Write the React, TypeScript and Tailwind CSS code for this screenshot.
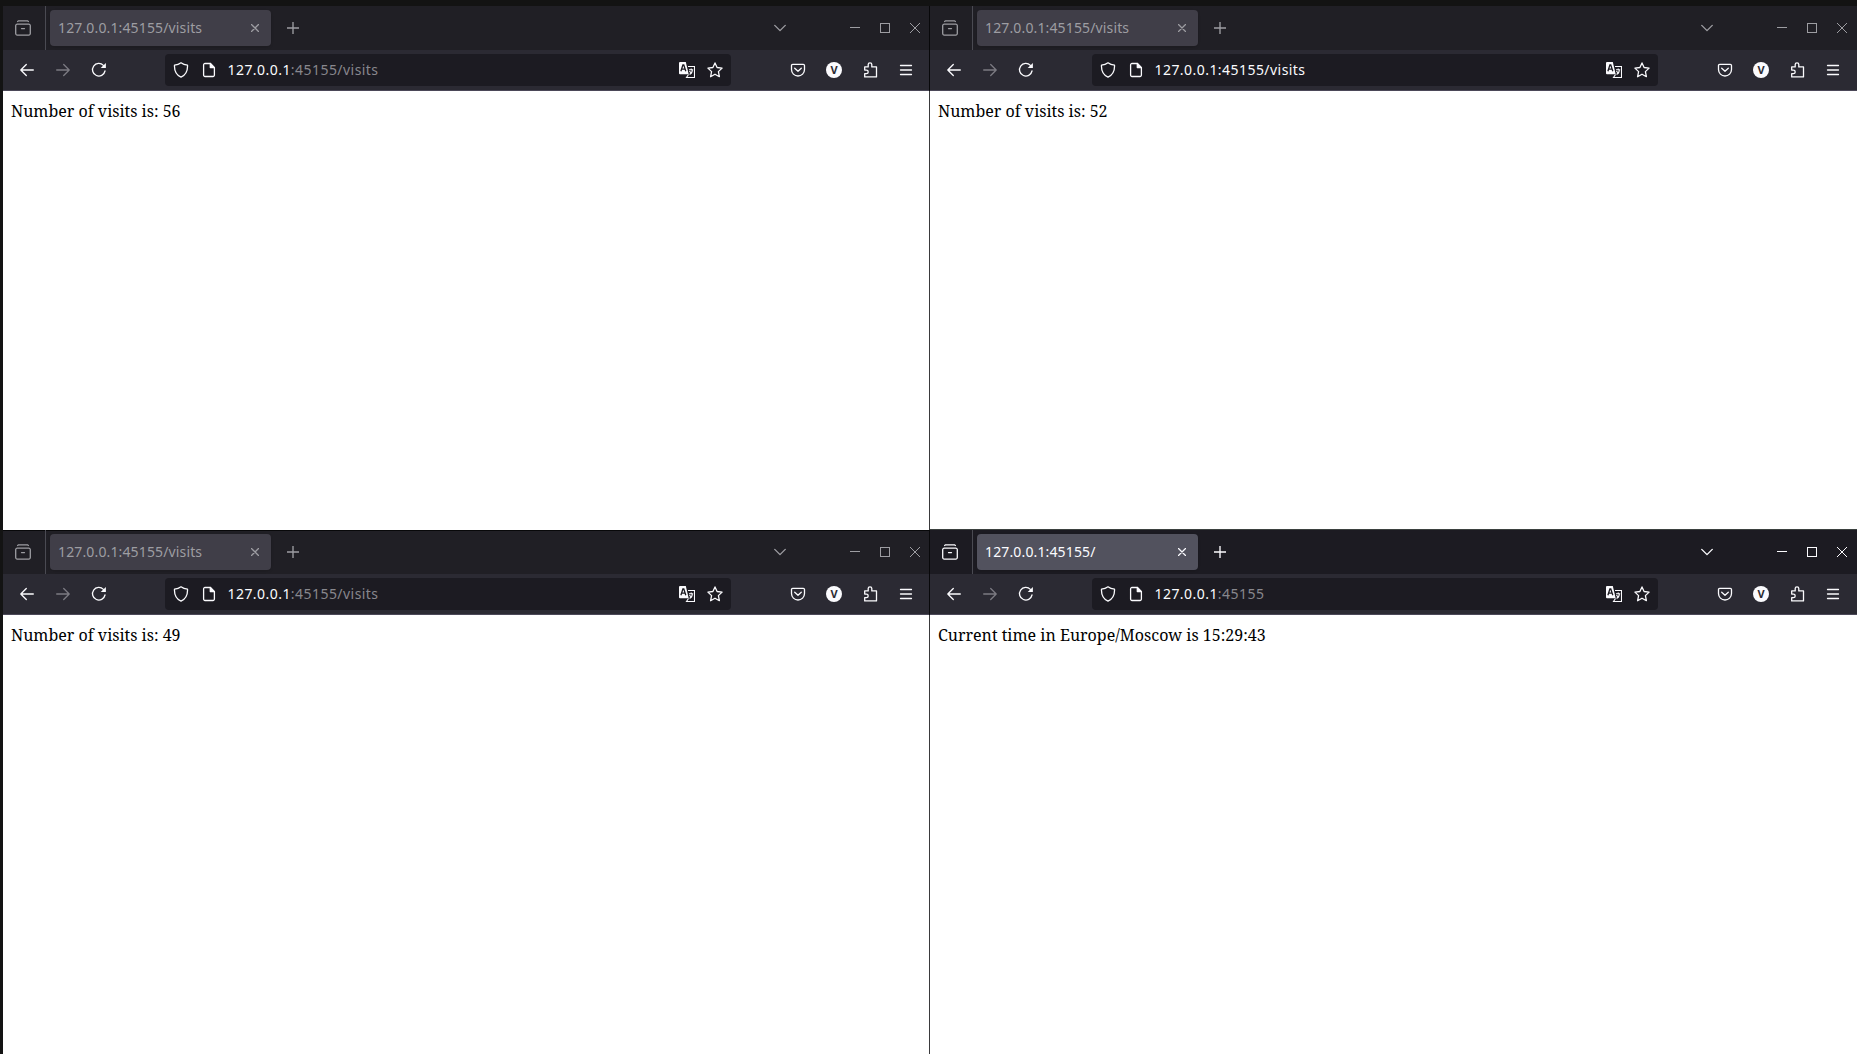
import React from "react";

type WindowProps = { tab: string; host: string; path: string; body: string; active?: boolean; brightPath?: boolean; side: "left" | "right"; strip?: string };

const Svg = ({ children, className = "", size = 16 }: { children: React.ReactNode; className?: string; size?: number }) => (
  <svg width={size} height={size} viewBox="0 0 16 16" fill="none" stroke="currentColor" strokeWidth="1.3" strokeLinecap="round" strokeLinejoin="round" className={"shrink-0 " + className}>
    {children}
  </svg>
);

function BrowserWindow({ tab, host, path, body, active, brightPath, side, strip = "" }: WindowProps) {
  const tone = active ? "text-[#fbfbfe]" : "text-[#9d9da2]";
  return (
    <section className="flex min-w-0 flex-col overflow-hidden">
      <div className={"flex h-11 shrink-0 items-center " + (active ? "bg-[#1c1b22] " : "bg-[#201f25] ") + tone + " " + strip}>
        <div className="flex h-full w-[43px] shrink-0 items-center border-r border-[#4a4a52] pl-3">
          <Svg>
            <path d="M2.600 1.500L3.600 .8h8.800l1 .7" />
            <path d="M2.200 4.200h11.600a1.500 1.500 0 0 1 1.500 1.500v7.900a1.500 1.500 0 0 1-1.500 1.500H2.200a1.500 1.500 0 0 1-1.500-1.500V5.700a1.500 1.500 0 0 1 1.500-1.500zM6.500 8.600h3" />
          </Svg>
        </div>
        <div className={"ml-1 flex h-9 w-[221px] shrink-0 items-center justify-between rounded pl-2 pr-3 shadow-sm " + (active ? "bg-[#52525e]" : "bg-[#403e48]")}>
          <span className="-mt-0.5 whitespace-nowrap font-['Noto_Sans'] text-[14px] tracking-[0.14px]">{tab}</span>
          <Svg size={8}><path d="M1 1l14 14M15 1L1 15" strokeWidth="2.600" /></Svg>
        </div>
        <Svg size={12} className="ml-[15.5px]"><path d="M8 0v16M0 8h16" strokeWidth="1.800" /></Svg>
        <div className={"ml-auto flex items-center " + (side === "left" ? "mr-[9px]" : "mr-2.5")}>
          <Svg size={12} className="mr-16"><path d="M1 4.500l7 7 7-7" strokeWidth="1.800" /></Svg>
          <svg width="70" height="10" fill="none" stroke="currentColor" shapeRendering="crispEdges">
            <path d="M0 4.500h10M30.500 .5h9v9h-9z" />
            <path d="M60 0l10 10M70 0l-10 10" shapeRendering="auto" />
          </svg>
        </div>
      </div>
      <div className="flex h-[41px] shrink-0 items-center border-b border-[#4b4858] bg-[#2b2a33] text-[#fbfbfe]">
        <Svg className="ml-4"><path d="M14.300 8H2M7.300 2.500L1.800 8l5.500 5.500" /></Svg>
        <Svg className="ml-5 text-[#7c7b82]"><path d="M1.700 8H14M8.700 2.500L14.200 8l-5.500 5.500" /></Svg>
        <Svg className="ml-5"><path d="M14 9a6.300 6.300 0 1 1-1.600-5.600" /><path d="M14.900 1v5H9.700z" fill="currentColor" stroke="none" /></Svg>
        <div className="ml-[58px] flex h-8 w-[566px] items-center rounded bg-[#1c1b22]">
          <Svg className="ml-2"><path d="M8 .8c2 1.500 4 2.100 6.500 2.300.300 5-1.500 9.800-6.500 12.100C3 12.900 1.200 8.100 1.500 3.100 4 2.900 6 2.300 8 .8z" /></Svg>
          <Svg className="ml-3"><path d="M9.300 1.500H4A1.400 1.400 0 0 0 2.600 2.900v10.200A1.400 1.400 0 0 0 4 14.500h8a1.400 1.400 0 0 0 1.400-1.400V5.600z" /><path d="M9.300 1.500v4.100h4.100z" fill="currentColor" /></Svg>
          <span className="-mt-0.5 ml-[10.5px] whitespace-nowrap font-['Noto_Sans'] text-[14px] tracking-[0.45px]">
            {host}<span className={brightPath ? "" : "text-[#88878d]"}>{path}</span>
          </span>
          <svg width="16" height="16" className="ml-auto shrink-0">
            <path d="M9 4.500h6.500v11H7.500l2-3" fill="none" stroke="currentColor" strokeWidth="1.100" />
            <path d="M1 0h5.800l2.900 12.200H1a1 1 0 0 1-1-1V1a1 1 0 0 1 1-1z" fill="currentColor" />
            <path d="M1.900 9.300L3.900 3h.9l2 6.300M2.700 7.200h3.400" fill="none" stroke="#1c1b22" strokeWidth="1.300" />
            <path d="M10 7.700h4.200M12.200 6.500v1.200M10.600 12.500c1.700-1 2.700-2.500 2.700-4.600M10.500 9c.5 1.200 1.500 1.900 2.500 2.200" fill="none" stroke="currentColor" strokeWidth="1.100" />
          </svg>
          <Svg className="ml-3 mr-2"><path d="M8 .9l2.100 4.600 5 .6-3.700 3.500 1 5.100L8 12.200l-4.400 2.500 1-5.100L.9 6.100l5-.6z" /></Svg>
        </div>
        <div className={"ml-auto flex items-center gap-5 " + (side === "left" ? "mr-[15px]" : "mr-4")}>
          <Svg><path d="M2.700 2.300h10.600a1.200 1.200 0 0 1 1.200 1.200V7.500a6.500 6.500 0 0 1-13 0V3.500a1.200 1.200 0 0 1 1.200-1.200zM4.700 6.200L8 9.300l3.300-3.100" /></Svg>
          <span className="flex size-4 items-center justify-center rounded-full bg-[#fbfbfe] font-['Noto_Sans'] text-[11px] font-bold leading-4 text-[#2b2a33]">V</span>
          <Svg><path d="M2.700 7V4.900h3.500V2.600a1.800 1.800 0 0 1 3.600 0v2.300h4.700v10H2.700v-3.200h1.700a1.800 1.800 0 0 0 0-3.600H2.700z" /></Svg>
          <Svg><path d="M2.500 3.500h11M2.500 8h11M2.500 12.500h11" /></Svg>
        </div>
      </div>
      <div className="min-h-0 flex-1 bg-white pl-2 pt-2 font-['Noto_Serif',serif] text-base text-black">{body}</div>
    </section>
  );
}

const Divider = () => (
  <>
    <div className="h-[85px] shrink-0 bg-[#08080a]" />
    <div className="flex-1 bg-[#3a3a3c]" />
  </>
);

export default function App() {
  return (
    <main className="flex h-[1054px] w-[1857px] flex-col overflow-hidden bg-[#131313] pl-[3px] pt-1.5">
      <div className="grid h-full grid-cols-[926px_1px_927px]">
        <div className="grid grid-rows-[524px_524px]">
          <BrowserWindow side="left" tab="127.0.0.1:45155/visits" host="127.0.0.1" path=":45155/visits" body="Number of visits is: 56" />
          <BrowserWindow side="left" tab="127.0.0.1:45155/visits" host="127.0.0.1" path=":45155/visits" body="Number of visits is: 49" strip="shadow-[inset_0_1px_0_#08080a]" />
        </div>
        <div className="grid grid-rows-[524px_524px]">
          <div className="flex flex-col"><Divider /></div>
          <div className="flex flex-col"><Divider /></div>
        </div>
        <div className="grid grid-rows-[523px_525px]">
          <BrowserWindow side="right" tab="127.0.0.1:45155/visits" host="127.0.0.1" path=":45155/visits" body="Number of visits is: 52" brightPath />
          <div className="grid border-t border-[#3b413f]">
            <BrowserWindow side="right" tab="127.0.0.1:45155/" host="127.0.0.1" path=":45155" body="Current time in Europe/Moscow is 15:29:43" active />
          </div>
        </div>
      </div>
    </main>
  );
}
